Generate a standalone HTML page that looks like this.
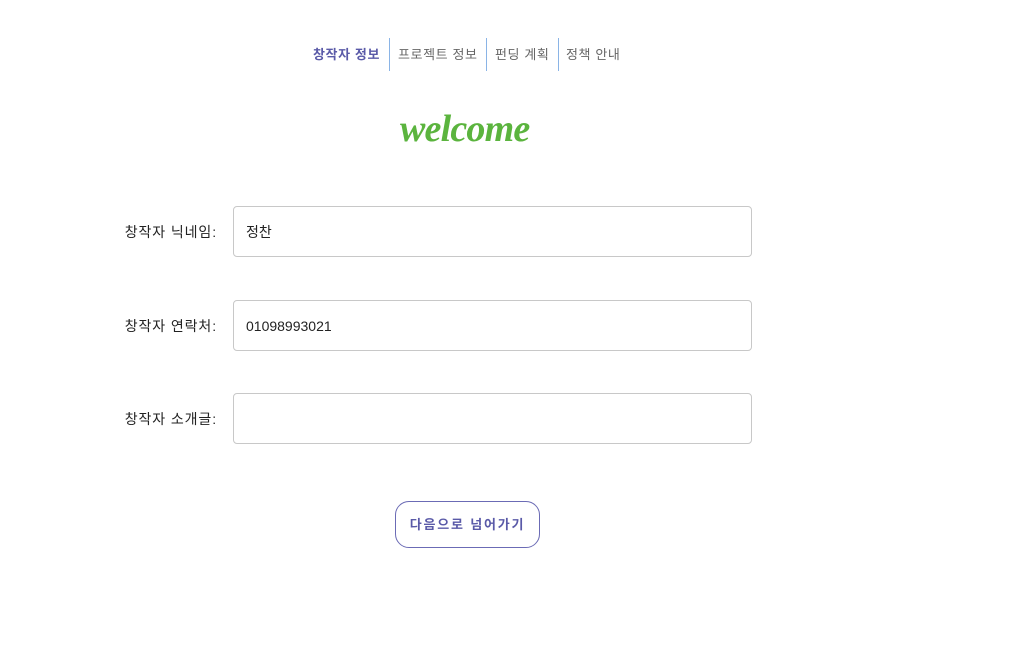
<!DOCTYPE html>
<html><head><meta charset="utf-8"><style>
body{margin:0;width:1029px;height:649px;background:#fff;font-family:"Liberation Sans","Noto Sans CJK KR",sans-serif;position:relative;overflow:hidden}
.nav{position:absolute;top:38px;height:33px;font-size:13px;line-height:33px;color:#666;letter-spacing:0.6px}
.sep{position:absolute;top:38px;width:1px;height:33px;background:#8ab4e6}
.welcome{position:absolute;left:400px;top:107px;font-family:"Liberation Serif",serif;font-style:italic;font-size:38px;color:#5bb43e;letter-spacing:-0.8px;font-weight:bold}
.lbl{position:absolute;right:812px;font-size:14px;color:#222;letter-spacing:0.9px}
.inp{position:absolute;left:233px;height:49px;border:1px solid #c8c8c8;border-radius:4px;box-sizing:content-box;font-size:14px;line-height:51px;padding-left:12px;width:505px;color:#222}
.btn{position:absolute;left:395px;top:501px;width:143px;height:45px;border:1px solid #6b6bb5;border-radius:14px;color:#5a5aa8;font-weight:bold;font-size:13px;line-height:45px;text-align:center;letter-spacing:1.8px}
</style></head><body>
<div class="nav" style="left:313px;color:#5a5aa8;font-weight:bold">창작자 정보</div>
<div class="sep" style="left:389px"></div>
<div class="nav" style="left:398px">프로젝트 정보</div>
<div class="sep" style="left:486px"></div>
<div class="nav" style="left:495px">펀딩 계획</div>
<div class="sep" style="left:558px"></div>
<div class="nav" style="left:566px">정책 안내</div>
<div class="welcome">welcome</div>
<div class="lbl" style="top:222px">창작자 닉네임:</div>
<div class="inp" style="top:206px">정찬</div>
<div class="lbl" style="top:316px">창작자 연락처:</div>
<div class="inp" style="top:300px">01098993021</div>
<div class="lbl" style="top:409px">창작자 소개글:</div>
<div class="inp" style="top:393px"></div>
<div class="btn">다음으로 넘어가기</div>
</body></html>
